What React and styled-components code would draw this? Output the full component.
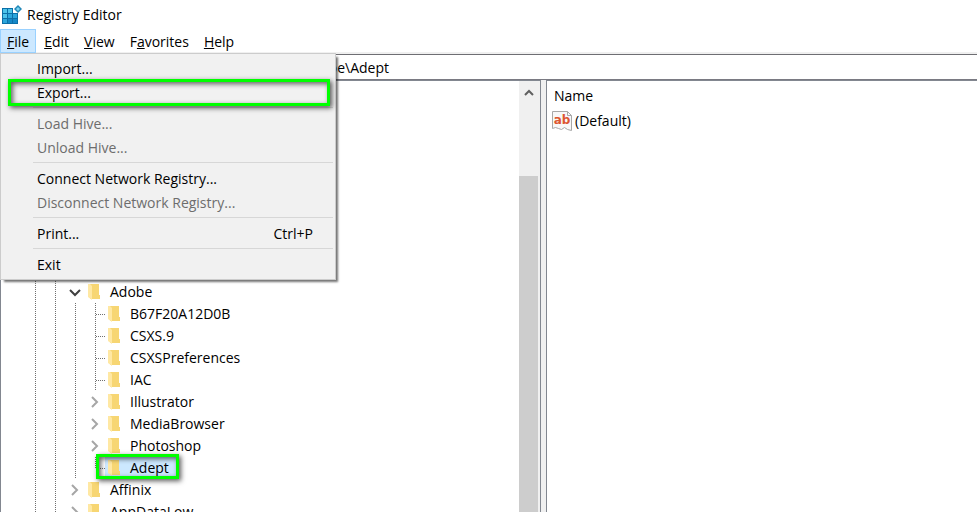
import React from 'react';
import styled, { createGlobalStyle } from 'styled-components';

const GlobalStyle = createGlobalStyle`
  * {
    box-sizing: border-box;
  }

  html,
  body,
  #root {
    height: 100%;
    margin: 0;
  }

  body {
    overflow: hidden;
    background: #fff;
    color: #000;
    font: 14px/22px 'Open Sans', 'Noto Sans', sans-serif;
  }

  button,
  input {
    font: inherit;
    color: inherit;
    border: 0;
    margin: 0;
    padding: 0;
    background: none;
  }
`;

const Window = styled.div`
  display: flex;
  flex-direction: column;
  height: 100%;
`;

const TitleBar = styled.header`
  display: flex;
  align-items: center;
  gap: 5px;
  height: 29px;
  padding: 0 2px;
`;

const Title = styled.h1`
  margin: 0;
  font-size: 14px;
  font-weight: 400;
`;

const MenuBar = styled.nav`
  display: flex;
  gap: 1px;
  height: 25px;
  border-bottom: 2px solid #f0f0f0;
`;

const MenuAnchor = styled.div`
  position: relative;
`;

const MenuButton = styled.button`
  height: 24px;
  padding: 1px 6px 0;
  border: 1px solid ${props => (props.$open ? '#99d1ff' : 'transparent')};
  background: ${props => (props.$open ? '#cce8ff' : 'transparent')};

  &:hover {
    background: #e5f3ff;
  }
`;

const Dropdown = styled.div`
  position: absolute;
  top: 24px;
  left: 0;
  z-index: 2;
  width: 336px;
  padding: 3px 2px 2px;
  border: 1px solid #ccc;
  background: #f1f1f1;
  box-shadow: 3px 3px 2px -1px rgba(0, 0, 0, 0.55);
`;

const DropdownItem = styled.button`
  position: relative;
  display: flex;
  justify-content: space-between;
  align-items: center;
  width: 100%;
  height: 24px;
  padding: 0 20px 0 34px;
  text-align: left;

  &:disabled {
    color: #6d6d6d;
  }
`;

const Separator = styled.hr`
  height: 1px;
  margin: 2px 0 4px 30px;
  border: 0;
  background: #d7d7d7;
`;

const Highlight = styled.span`
  position: absolute;
  inset: ${props => props.$inset};
  z-index: 1;
  border: 3px solid #00ff00;
  box-shadow: 2px 2px 5px rgba(0, 0, 0, 0.65), inset 2px 2px 5px rgba(0, 0, 0, 0.6);
  pointer-events: none;
`;

const AddressBar = styled.input`
  flex: none;
  width: 100%;
  height: 26px;
  padding: 1px 0 0 20px;
  border-top: 1px solid #6e6e73;
  border-bottom: 1px solid #7a7a82;
  outline: 0;
`;

const Panes = styled.main`
  display: flex;
  flex: 1;
  gap: 5px;
  min-height: 0;
  background: #f0f0f0;
`;

const TreePane = styled.section`
  display: flex;
  flex: 0 0 541px;
  border: solid #828790;
  border-width: 1px 1px 0;
  background: #fff;
`;

const Tree = styled.ul`
  flex: 1;
  margin: 0;
  padding: 200px 0 0 24px;
  overflow: hidden;
  list-style: none;
`;

const TreeRow = styled.li`
  position: relative;
  display: flex;
  width: max-content;
  height: 22px;
`;

const Guide = styled.span`
  display: flex;
  align-items: center;
  justify-content: center;
  width: 20px;
  height: 22px;
  color: ${props => (props.$open ? '#404040' : '#a6a6a6')};
`;

const TreeLabel = styled.span`
  display: flex;
  align-items: center;
  gap: 10px;
  padding: 0 8px 0 3px;
  background: ${props => (props.$selected ? '#cce8ff' : 'transparent')};
`;

const ScrollBar = styled.div`
  display: flex;
  flex-direction: column;
  width: 21px;
  padding: 1px 2px 0 0;
  background: #f0f0f0;
`;

const ScrollButton = styled.button`
  display: flex;
  align-items: center;
  justify-content: center;
  height: 21px;
  color: #606060;
`;

const ScrollThumb = styled.div`
  flex: 1;
  margin-top: 73px;
  background: #cdcdcd;
`;

const ListPane = styled.section`
  flex: 1;
  border: solid #828790;
  border-width: 1px 0 0 1px;
  background: #fff;
`;

const ValueTable = styled.table`
  width: 100%;
  border-collapse: collapse;
  text-align: left;
`;

const NameHeader = styled.th`
  height: 29px;
  padding: 0 7px;
  font-weight: 400;
`;

const NameCell = styled.td`
  height: 22px;
  padding: 0 5px;
`;

const ValueName = styled.span`
  display: flex;
  align-items: center;
  gap: 3px;
`;

const AppIcon = () => (
  <svg width="20" height="20" viewBox="0 0 20 20" aria-hidden="true">
    <path d="M0 3h11v5h5v11H0z" fill="#0b6fa8" />
    <path d="M1 4h4v4H1zM6 4h4v4H6zM1 9h4v4H1z" fill="#4cc3ea" />
    <path d="M6 9h4v4H6zM11 9h4v4h-4zM1 14h4v4H1z" fill="#2ba6dc" />
    <path d="M6 14h4v4H6zM11 14h4v4h-4z" fill="#1488c8" />
    <path d="M16 0l4 4-4 4-4-4z" fill="#2187b8" />
    <path d="M16 2l2 2-2 2-2-2z" fill="#7bd3ef" />
  </svg>
);

const FolderIcon = () => (
  <svg width="12" height="18" viewBox="0 0 12 18" aria-hidden="true">
    <path d="M2 1h9v11h1v4H2z" fill="#f7d673" />
    <path d="M0 1h2l2 2v14l-4-3z" fill="#ffe8a3" />
  </svg>
);

const StringIcon = () => (
  <svg width="20" height="20" viewBox="0 0 20 20" aria-hidden="true">
    <path d="M.5.5h15l4 4v15l-4-1-3-2-3 2-3-1-3-1-3 1z" fill="#f8f8f8" stroke="#a8a8a8" />
    <path d="M15.5.5v4h4" fill="none" stroke="#a8a8a8" />
    <text x="10" y="13" textAnchor="middle" fontFamily="DejaVu Sans" fontSize="12" fontWeight="700" fill="#dd5631">ab</text>
  </svg>
);

const Chevron = ({ open }) => (
  <svg width="12" height="12" viewBox="0 0 12 12" fill="none" stroke="currentColor" strokeWidth="2" aria-hidden="true">
    <path d={open ? 'M1 4l5 5 5-5' : 'M3 1l5 5-5 5'} />
  </svg>
);

const Dots = ({ d }) => (
  <svg width="20" height="22" viewBox="0 0 20 22" fill="none" stroke="#707070" strokeDasharray="1 1" aria-hidden="true">
    <path d={d} />
  </svg>
);

const menus = [
  ['F', 'ile'],
  ['E', 'dit'],
  ['V', 'iew'],
  ['F', 'avorites', 'a'],
  ['H', 'elp'],
];

const fileMenu = [
  { label: 'Import...' },
  { label: 'Export...', marked: true },
  null,
  { label: 'Load Hive...', disabled: true },
  { label: 'Unload Hive...', disabled: true },
  null,
  { label: 'Connect Network Registry...' },
  { label: 'Disconnect Network Registry...', disabled: true },
  null,
  { label: 'Print...', shortcut: 'Ctrl+P' },
  null,
  { label: 'Exit' },
];

const keys = [
  { name: 'Adobe', depth: 2, state: 'open' },
  { name: 'B67F20A12D0B', depth: 3 },
  { name: 'CSXS.9', depth: 3 },
  { name: 'CSXSPreferences', depth: 3 },
  { name: 'IAC', depth: 3 },
  { name: 'Illustrator', depth: 3, state: 'closed' },
  { name: 'MediaBrowser', depth: 3, state: 'closed' },
  { name: 'Photoshop', depth: 3, state: 'closed' },
  { name: 'Adept', depth: 3, selected: true },
  { name: 'Affinix', depth: 2, state: 'closed' },
  { name: 'AppDataLow', depth: 2, state: 'closed' },
];

const MenuLabel = ({ parts: [first, rest, accessKey] }) =>
  accessKey ? (
    <>{first}<u>{accessKey}</u>{rest.slice(1)}</>
  ) : (
    <><u>{first}</u>{rest}</>
  );

const App = () => (
  <>
    <GlobalStyle />
    <Window>
      <TitleBar>
        <AppIcon />
        <Title>Registry Editor</Title>
      </TitleBar>
      <MenuBar>
        {menus.map((parts, index) => (
          <MenuAnchor key={index}>
            <MenuButton $open={index === 0}>
              <MenuLabel parts={parts} />
            </MenuButton>
            {index === 0 && (
              <Dropdown>
                {fileMenu.map((item, i) =>
                  item ? (
                    <DropdownItem key={i} disabled={item.disabled}>
                      <span>{item.label}</span>
                      {item.shortcut && <span>{item.shortcut}</span>}
                      {item.marked && <Highlight $inset="-2px 3px -1px 5px" />}
                    </DropdownItem>
                  ) : (
                    <Separator key={i} />
                  )
                )}
              </Dropdown>
            )}
          </MenuAnchor>
        ))}
      </MenuBar>
      <AddressBar aria-label="Address" defaultValue="Computer\HKEY_CURRENT_USER\Software\Adobe\Adept" />
      <Panes>
        <TreePane>
          <Tree>
            {keys.map(key => (
              <TreeRow key={key.name}>
                {Array.from({ length: key.depth }, (_, i) => (
                  <Guide key={i}>
                    <Dots d="M10.5 0v22" />
                  </Guide>
                ))}
                <Guide $open={key.state === 'open'}>
                  {key.state ? (
                    <Chevron open={key.state === 'open'} />
                  ) : (
                    <Dots d={key.selected ? 'M10.5 0v12M11 11.5h9' : 'M10.5 0v22M11 11.5h9'} />
                  )}
                </Guide>
                <TreeLabel $selected={key.selected}>
                  <FolderIcon />
                  {key.name}
                </TreeLabel>
                {key.selected && <Highlight $inset="-3px -2px 0 71px" />}
              </TreeRow>
            ))}
          </Tree>
          <ScrollBar>
            <ScrollButton aria-label="Scroll up">
              <svg width="12" height="12" viewBox="0 0 12 12" fill="none" stroke="currentColor" strokeWidth="2" aria-hidden="true">
                <path d="M2 8l4-4 4 4" />
              </svg>
            </ScrollButton>
            <ScrollThumb />
          </ScrollBar>
        </TreePane>
        <ListPane>
          <ValueTable>
            <thead>
              <tr>
                <NameHeader>Name</NameHeader>
              </tr>
            </thead>
            <tbody>
              <tr>
                <NameCell>
                  <ValueName>
                    <StringIcon />
                    (Default)
                  </ValueName>
                </NameCell>
              </tr>
            </tbody>
          </ValueTable>
        </ListPane>
      </Panes>
    </Window>
  </>
);

export default App;
